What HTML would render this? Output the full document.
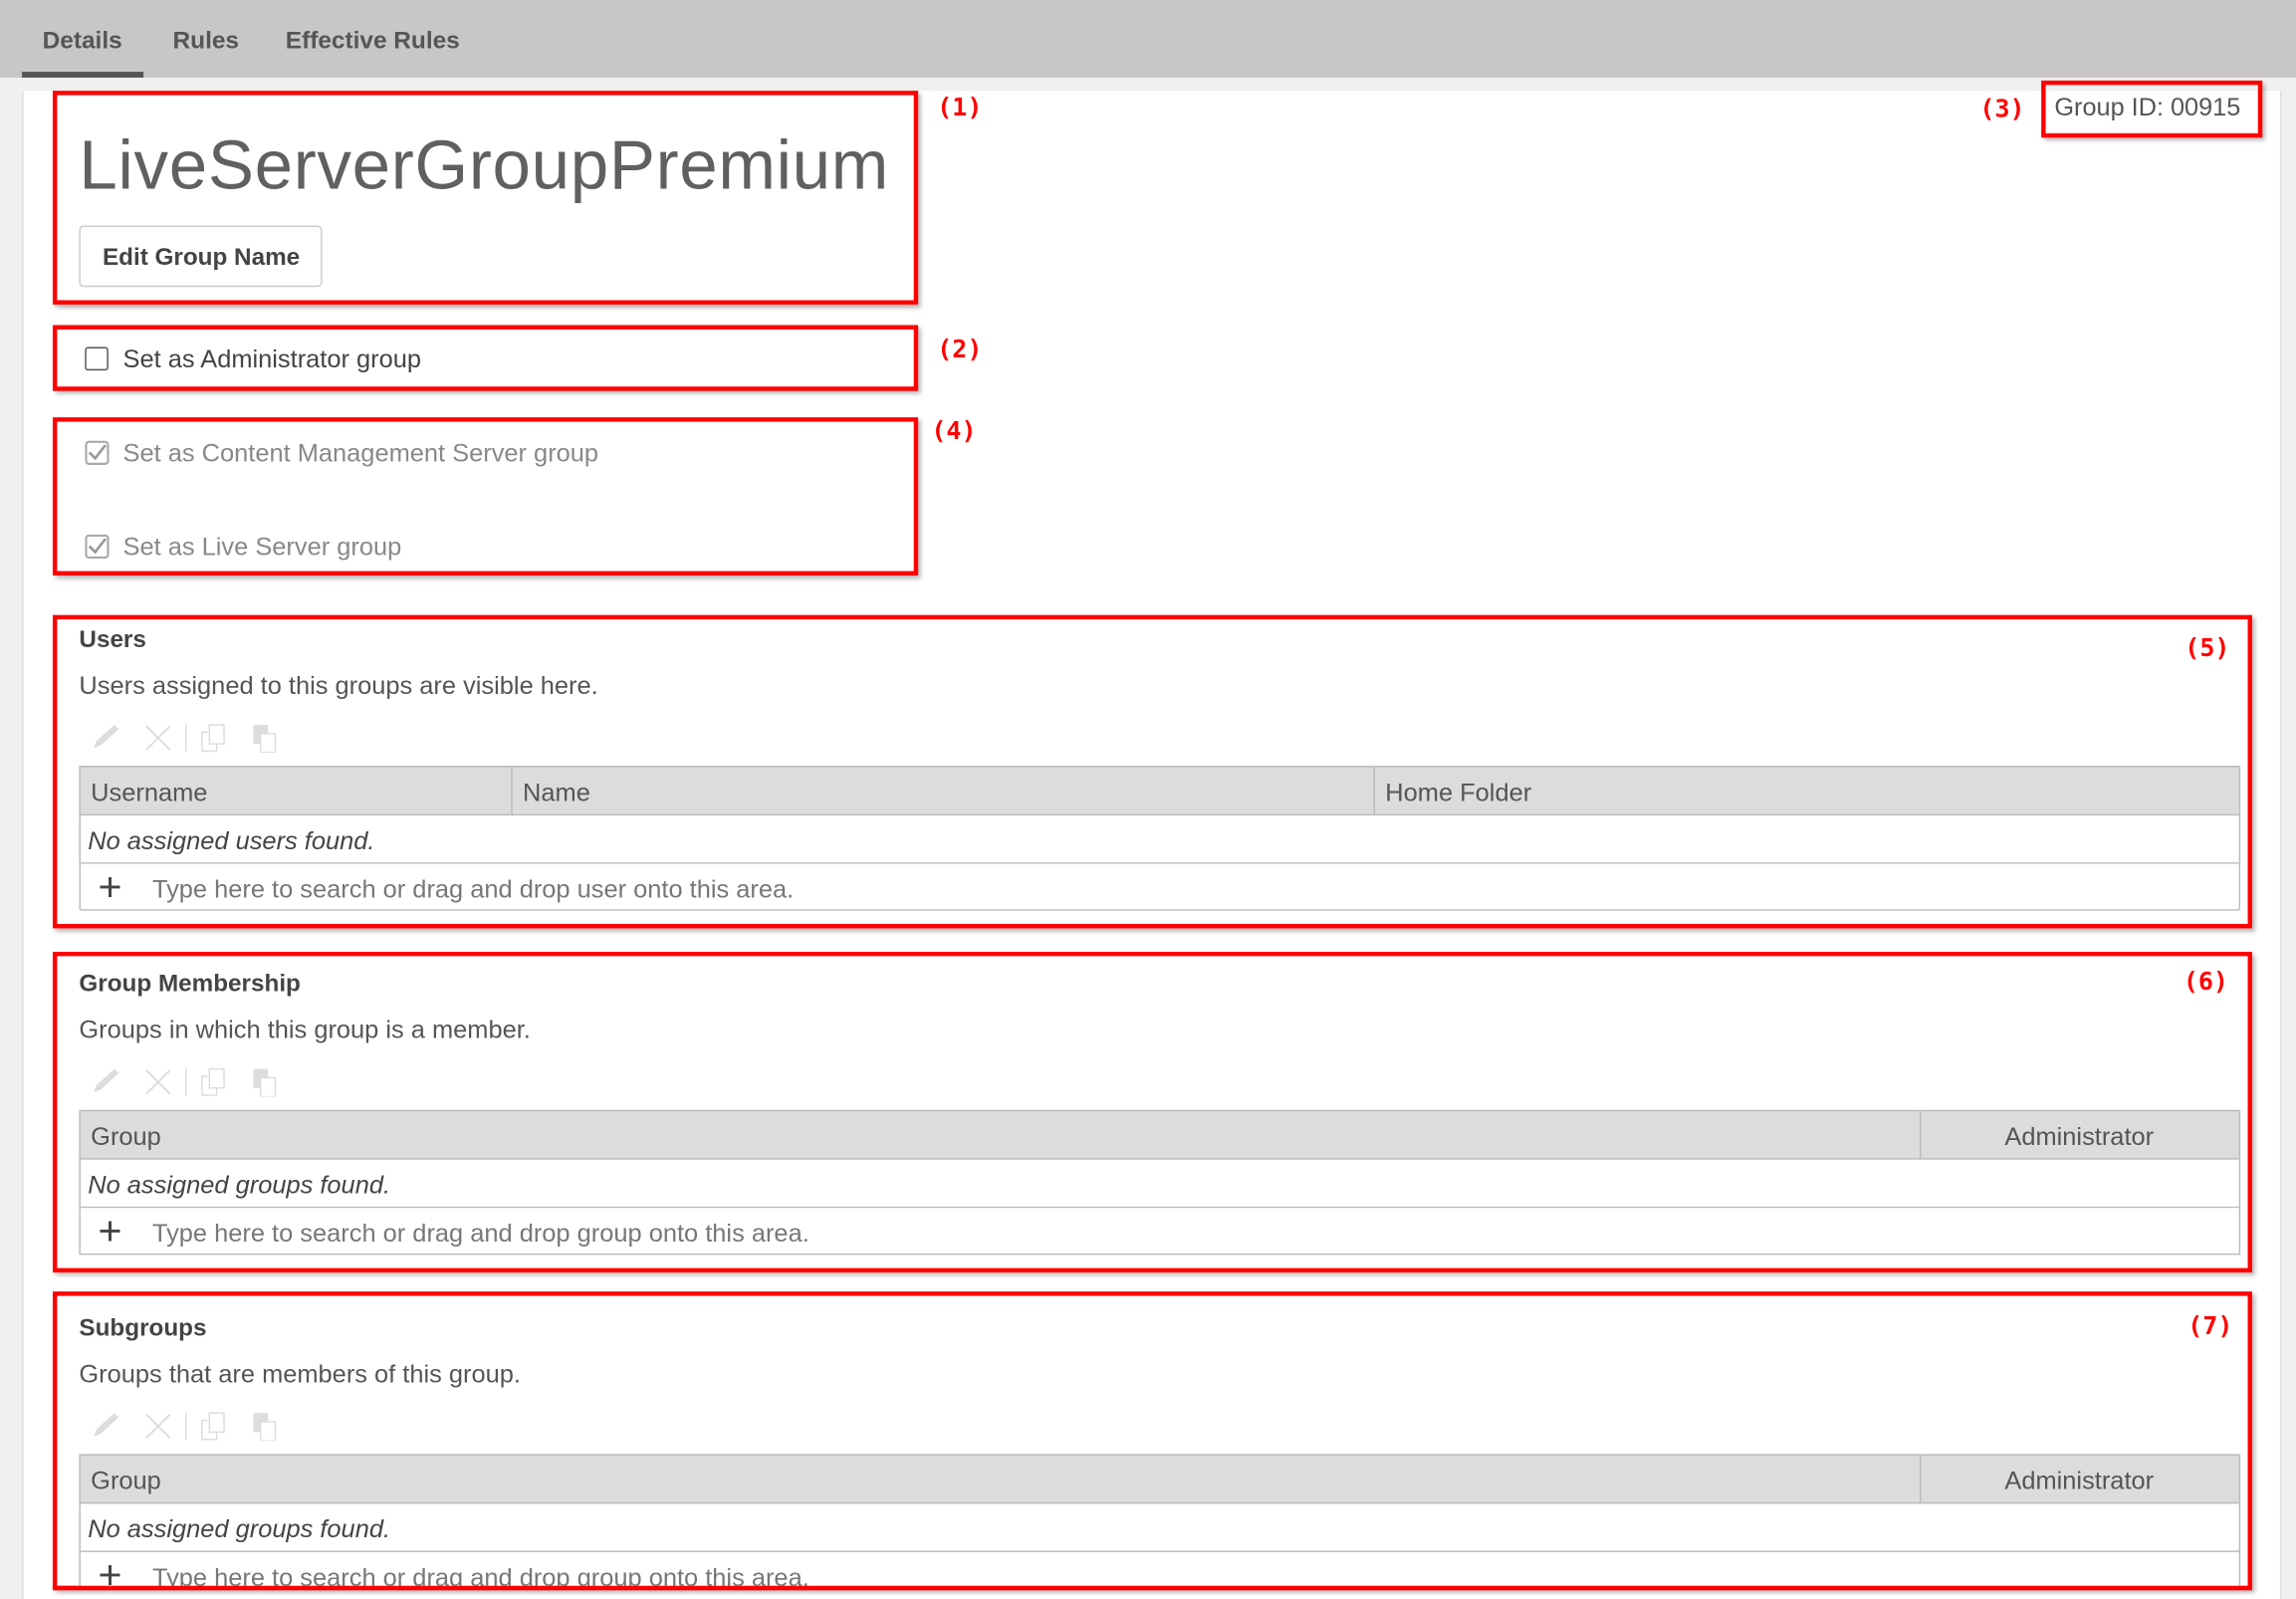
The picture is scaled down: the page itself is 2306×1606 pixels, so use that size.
<!DOCTYPE html>
<html><head><meta charset="utf-8"><style>
html,body{margin:0;padding:0;width:2306px;height:1599px;overflow:hidden;background:#f0f0f0}
#w{position:absolute;left:0;top:0;width:1568px;height:1088px;transform:scale(1.4707);transform-origin:0 0;font-family:"Liberation Sans",sans-serif;color:#444}
.a{position:absolute}
.t{position:absolute;white-space:nowrap;line-height:1}
.rb{position:absolute;border:3px solid #f00;box-shadow:2px 2px 3px rgba(0,0,0,.3);box-sizing:border-box}
.lab{position:absolute;color:#f00;font-family:"DejaVu Sans Mono",monospace;font-weight:bold;font-size:17px;line-height:1}
.tab{position:absolute;top:18px;font-size:16.6px;font-weight:bold;color:#555}
.hd{position:absolute;left:54px;width:1476px;height:34px;background:#dcdcdc;border:1px solid #bbb;box-sizing:border-box}
.row{position:absolute;left:54px;width:1476px;height:33px;background:#fff;border:1px solid #bbb;border-top:none;box-sizing:border-box}
.cell{position:absolute;top:9px;font-size:17.3px;color:#555;white-space:nowrap;line-height:1}
.ttl{font-size:16.5px;font-weight:bold;color:#444}
.desc{font-size:17.3px;color:#555}
</style></head><body><div id="w">
<div class="a" style="left:0;top:0;width:1568px;height:53px;background:#c8c6c7"></div>
<div class="tab" style="left:29px">Details</div>
<div class="tab" style="left:118px">Rules</div>
<div class="tab" style="left:195px">Effective Rules</div>
<div class="a" style="left:15px;top:49px;width:83px;height:4px;background:#555"></div>
<div class="a" style="left:15px;top:62px;width:1541px;height:1030px;background:#fff;border-left:1px solid #ddd;border-right:1px solid #ddd"></div>

<div class="rb" style="left:36px;top:62px;width:591px;height:146px"></div>
<div class="t" style="left:54px;top:89px;font-size:47px;color:#606060;letter-spacing:0.45px">LiveServerGroupPremium</div>
<div class="a" style="left:54px;top:154px;width:166px;height:42px;border:1px solid #ccc;border-radius:3px;box-sizing:border-box"></div>
<div class="t" style="left:70px;top:168px;font-size:16.5px;font-weight:bold;color:#444">Edit Group Name</div>
<div class="lab" style="left:640px;top:66px">(1)</div>

<div class="rb" style="left:36px;top:222px;width:591px;height:45px"></div>
<div class="a" style="left:58px;top:237px;width:16px;height:16px;border:1.5px solid #555;border-radius:2px;box-sizing:border-box"></div>
<div class="t" style="left:84px;top:237px;font-size:17.3px;color:#444">Set as Administrator group</div>
<div class="lab" style="left:640px;top:231px">(2)</div>

<div class="rb" style="left:36px;top:285px;width:591px;height:108px"></div>
<svg class="a" style="left:58px;top:301px" width="17" height="17" viewBox="0 0 17 17"><rect x="0.75" y="0.75" width="15" height="15" rx="2" fill="none" stroke="#aaa" stroke-width="1.5"/><path d="M3 8 L7 12 L14 3" fill="none" stroke="#999" stroke-width="1.8"/></svg>
<div class="t" style="left:84px;top:301px;font-size:17.3px;color:#888">Set as Content Management Server group</div>
<svg class="a" style="left:58px;top:365px" width="17" height="17" viewBox="0 0 17 17"><rect x="0.75" y="0.75" width="15" height="15" rx="2" fill="none" stroke="#aaa" stroke-width="1.5"/><path d="M3 8 L7 12 L14 3" fill="none" stroke="#999" stroke-width="1.8"/></svg>
<div class="t" style="left:84px;top:365px;font-size:17.3px;color:#888">Set as Live Server group</div>
<div class="lab" style="left:636px;top:287px">(4)</div>

<div class="lab" style="left:1352px;top:67px">(3)</div>
<div class="rb" style="left:1394px;top:55px;width:151px;height:39px"></div>
<div class="t" style="left:1403px;top:65px;font-size:17.2px;color:#555">Group ID: 00915</div>

<!-- Users -->
<div class="rb" style="left:36px;top:420px;width:1502px;height:214px"></div>
<div class="t ttl" style="left:54px;top:429px">Users</div>
<div class="t desc" style="left:54px;top:460px">Users assigned to this groups are visible here.</div>
<div class="lab" style="left:1492px;top:435px">(5)</div>
<svg class="a" style="left:60px;top:492px" width="136" height="22"><path d="M4 19 L6 14 L18 3 L21 6 L9 17 Z" fill="#ddd"/><path d="M40 4 L56 20 M56 4 L40 20" stroke="#ddd" stroke-width="1.3"/><path d="M67 3 V21" stroke="#ddd"/><rect x="78" y="8" width="10" height="13" fill="none" stroke="#ddd"/><rect x="83" y="3" width="10" height="13" fill="#fff" stroke="#ddd"/><rect x="113" y="3" width="10" height="13" fill="#ddd"/><rect x="118" y="9" width="10" height="13" fill="#fff" stroke="#ddd"/></svg>
<div class="hd" style="top:523px"><div class="a" style="left:294px;top:0;width:1px;height:33px;background:#bbb"></div><div class="a" style="left:883px;top:0;width:1px;height:33px;background:#bbb"></div><div class="cell" style="left:7px">Username</div><div class="cell" style="left:302px">Name</div><div class="cell" style="left:891px">Home Folder</div></div>
<div class="row" style="top:557px"><div class="cell" style="left:5px;font-style:italic;color:#444">No assigned users found.</div></div>
<div class="row" style="top:590px;height:32px;border-radius:0 0 2px 2px"><div class="cell" style="left:12px;top:2px;font-size:28px;color:#444">+</div><div class="cell" style="left:49px;color:#777">Type here to search or drag and drop user onto this area.</div></div>

<!-- Group Membership -->
<div class="rb" style="left:36px;top:650px;width:1502px;height:219px"></div>
<div class="t ttl" style="left:54px;top:664px">Group Membership</div>
<div class="t desc" style="left:54px;top:695px">Groups in which this group is a member.</div>
<div class="lab" style="left:1491px;top:663px">(6)</div>
<svg class="a" style="left:60px;top:727px" width="136" height="22"><path d="M4 19 L6 14 L18 3 L21 6 L9 17 Z" fill="#ddd"/><path d="M40 4 L56 20 M56 4 L40 20" stroke="#ddd" stroke-width="1.3"/><path d="M67 3 V21" stroke="#ddd"/><rect x="78" y="8" width="10" height="13" fill="none" stroke="#ddd"/><rect x="83" y="3" width="10" height="13" fill="#fff" stroke="#ddd"/><rect x="113" y="3" width="10" height="13" fill="#ddd"/><rect x="118" y="9" width="10" height="13" fill="#fff" stroke="#ddd"/></svg>
<div class="hd" style="top:758px"><div class="a" style="left:1256px;top:0;width:1px;height:33px;background:#bbb"></div><div class="cell" style="left:7px">Group</div><div class="cell" style="left:1314px">Administrator</div></div>
<div class="row" style="top:792px"><div class="cell" style="left:5px;font-style:italic;color:#444">No assigned groups found.</div></div>
<div class="row" style="top:825px;height:32px"><div class="cell" style="left:12px;top:2px;font-size:28px;color:#444">+</div><div class="cell" style="left:49px;color:#777">Type here to search or drag and drop group onto this area.</div></div>

<!-- Subgroups -->
<div class="rb" style="left:36px;top:882px;width:1502px;height:204px"></div>
<div class="t ttl" style="left:54px;top:899px">Subgroups</div>
<div class="t desc" style="left:54px;top:930px">Groups that are members of this group.</div>
<div class="lab" style="left:1494px;top:898px">(7)</div>
<svg class="a" style="left:60px;top:962px" width="136" height="22"><path d="M4 19 L6 14 L18 3 L21 6 L9 17 Z" fill="#ddd"/><path d="M40 4 L56 20 M56 4 L40 20" stroke="#ddd" stroke-width="1.3"/><path d="M67 3 V21" stroke="#ddd"/><rect x="78" y="8" width="10" height="13" fill="none" stroke="#ddd"/><rect x="83" y="3" width="10" height="13" fill="#fff" stroke="#ddd"/><rect x="113" y="3" width="10" height="13" fill="#ddd"/><rect x="118" y="9" width="10" height="13" fill="#fff" stroke="#ddd"/></svg>
<div class="hd" style="top:993px"><div class="a" style="left:1256px;top:0;width:1px;height:33px;background:#bbb"></div><div class="cell" style="left:7px">Group</div><div class="cell" style="left:1314px">Administrator</div></div>
<div class="row" style="top:1027px"><div class="cell" style="left:5px;font-style:italic;color:#444">No assigned groups found.</div></div>
<div class="row" style="top:1060px;height:23px;border-bottom:none;overflow:hidden"><div class="cell" style="left:12px;top:2px;font-size:28px;color:#444">+</div><div class="cell" style="left:49px;color:#777">Type here to search or drag and drop group onto this area.</div></div>
<div class="a" style="left:36px;top:1083px;width:1502px;height:3px;background:#f00"></div>
</div></body></html>
